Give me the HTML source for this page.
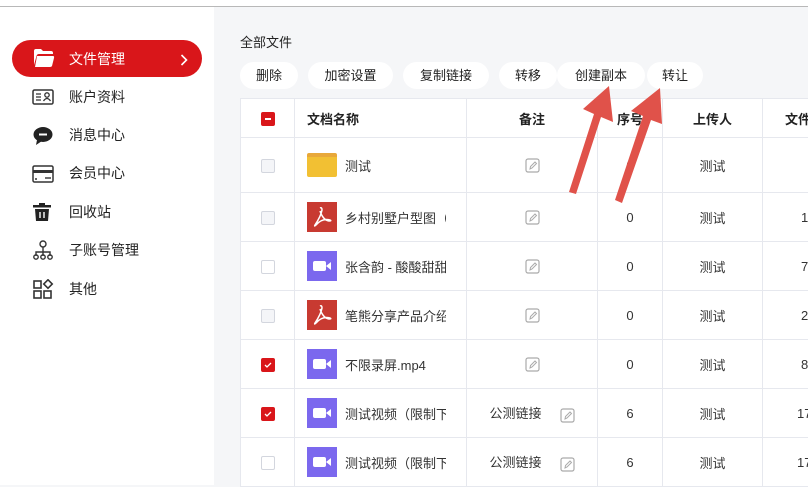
<!DOCTYPE html>
<html><head><meta charset="utf-8"><style>
*{margin:0;padding:0;box-sizing:border-box}
body{width:808px;height:485px;overflow:hidden;background:#f5f6f8;font-family:"Liberation Sans","Noto Sans CJK SC",sans-serif;color:#222;position:relative}
.top{position:absolute;left:0;top:0;width:808px;height:7px;background:#fff;border-bottom:1px solid #b8b8b8}
.side{position:absolute;left:0;top:7px;width:214px;height:478px;background:#fff}
.act{position:absolute;left:12px;top:40px;width:190px;height:37px;border-radius:19px;background:#d9161a}
.mi{position:absolute;left:69px;font-size:14px;line-height:20px;color:#222}
.ic{position:absolute;left:32px}
.crumb{position:absolute;left:240px;top:32px;font-size:13px;color:#222}
.btn{position:absolute;top:62px;height:27px;border-radius:14px;background:#fff;font-size:13px;line-height:27px;text-align:center;color:#222}
table{position:absolute;left:240px;top:98px;border-collapse:collapse;background:#fff;font-size:13px;table-layout:fixed;width:582px}
td{border:1px solid #e6e8ee;height:49px;text-align:center;white-space:nowrap;overflow:hidden;color:#333}
tr.h td{height:39px;font-weight:bold;color:#222}
tr.r1 td{height:55px}
.cb{display:inline-block;width:14px;height:14px;border:1px solid #d3d6de;border-radius:2px;background:#f4f5f8;vertical-align:middle}
.cb.w{background:#fff}
.cb.on{background:#d9161a;border-color:#d9161a;position:relative}
.nm{text-align:left;padding-left:12px}
.nm span{display:inline-block;vertical-align:middle}
.nm .t{max-width:101px;overflow:hidden}
.fi{width:30px;height:30px;margin-right:8px;position:relative}
.vid{background:#7b68ee}
.pdf{background:#c83a31}
.ed{display:inline-block;vertical-align:middle}
</style></head><body>
<div class="top"></div>
<div class="side"></div>
<div class="act"></div>
<svg class="ic" style="top:48px" width="23" height="20" viewBox="0 0 23 20"><path d="M2 3 Q2 1 4 1 H9 L11 3 H19 Q21 3 21 5 V6 H7 Q5 6 4.5 8 L2 17 Z" fill="#fff"/><path d="M5 8 H21 Q22.5 8 22 10 L20 18 Q19.5 19 18 19 H3 Z" fill="#fff"/></svg>
<div class="mi" style="top:49px;color:#fff">文件管理</div>
<svg style="position:absolute;left:180px;top:54px" width="8" height="12"><path d="M1.5 1 L6.5 6 L1.5 11" stroke="#fff" stroke-width="1.6" fill="none"/></svg>
<svg class="ic" style="top:89px" width="22" height="16"><rect x="1" y="1" width="20" height="14" rx="1.5" fill="none" stroke="#333" stroke-width="1.5"/><path d="M4 5h5M4 8h5M4 11h5" stroke="#333" stroke-width="1.3"/><circle cx="15" cy="6" r="2.2" fill="none" stroke="#333" stroke-width="1.3"/><path d="M11.5 12 Q15 7 18.5 12" stroke="#333" stroke-width="1.3" fill="none"/></svg>
<div class="mi" style="top:87px">账户资料</div>
<svg class="ic" style="top:126px" width="22" height="20"><ellipse cx="11" cy="8.5" rx="9.5" ry="7.5" fill="#222"/><path d="M5 14 L4 19 L10 15Z" fill="#222"/><rect x="7" y="7.5" width="8" height="2" fill="#fff"/></svg>
<div class="mi" style="top:125px">消息中心</div>
<svg class="ic" style="top:165px" width="22" height="18"><rect x="1" y="1" width="20" height="16" rx="1.5" fill="none" stroke="#333" stroke-width="1.5"/><rect x="1" y="5" width="20" height="3" fill="#333"/><circle cx="4" cy="14" r="1" fill="#333"/><path d="M13 13h6" stroke="#333" stroke-width="1.4"/></svg>
<div class="mi" style="top:163px">会员中心</div>
<svg class="ic" style="top:203px" width="20" height="18"><rect x="1" y="2" width="18" height="2.5" fill="#222"/><rect x="7" y="0" width="6" height="2" fill="#222"/><path d="M3 6 H17 L16 18 H4Z" fill="#222"/><path d="M8 9v6M12 9v6" stroke="#fff" stroke-width="1.4"/></svg>
<div class="mi" style="top:202px">回收站</div>
<svg class="ic" style="top:240px" width="22" height="20"><circle cx="11" cy="4" r="3" fill="none" stroke="#333" stroke-width="1.4"/><path d="M11 7v4M4 16v-4h14v4M11 11v5" stroke="#333" stroke-width="1.4" fill="none"/><circle cx="4" cy="17" r="2.2" fill="none" stroke="#333" stroke-width="1.4"/><circle cx="11" cy="17" r="2.2" fill="none" stroke="#333" stroke-width="1.4"/><circle cx="18" cy="17" r="2.2" fill="none" stroke="#333" stroke-width="1.4"/></svg>
<div class="mi" style="top:240px">子账号管理</div>
<svg class="ic" style="top:279px" width="22" height="21"><rect x="2" y="2" width="7" height="7" fill="none" stroke="#333" stroke-width="1.6"/><rect x="2" y="12" width="7" height="7" fill="none" stroke="#333" stroke-width="1.6"/><rect x="12" y="12" width="7" height="7" fill="none" stroke="#333" stroke-width="1.6"/><rect x="13" y="2" width="6" height="6" transform="rotate(45 16 5)" fill="none" stroke="#333" stroke-width="1.6"/></svg>
<div class="mi" style="top:279px">其他</div>

<div class="crumb">全部文件</div>
<div class="btn" style="left:240px;width:58px">删除</div>
<div class="btn" style="left:308px;width:85px">加密设置</div>
<div class="btn" style="left:403px;width:86px">复制链接</div>
<div class="btn" style="left:499px;width:58px">转移</div>
<div class="btn" style="left:557px;width:88px">创建副本</div>
<div class="btn" style="left:647px;width:56px">转让</div>

<table>
<colgroup><col style="width:54px"><col style="width:172px"><col style="width:131px"><col style="width:65px"><col style="width:100px"><col style="width:60px"></colgroup>
<tr class="h"><td><span class="cb on"><span style="position:absolute;left:3px;top:5px;width:6px;height:2px;background:#fff"></span></span></td><td class="nm">文档名称</td><td>备注</td><td>序号</td><td>上传人</td><td style="text-align:left;padding-left:22px">文件</td></tr>
<tr class="r1"><td><span class="cb"></span></td><td class="nm"><span class="fi" style="background:#f2c033;height:24px;border-radius:2px;border-top:4px solid #e8a83a"></span><span class="t">测试</span></td><td><svg class="ed" width="15" height="15"><rect x="1" y="1" width="13" height="13" rx="2" fill="none" stroke="#aaa" stroke-width="1.2"/><path d="M5 11 L5.5 8.5 L10 4 L11.5 5.5 L7 10 Z" fill="none" stroke="#aaa" stroke-width="1"/></svg></td><td>0</td><td>测试</td><td></td></tr>
<tr><td><span class="cb"></span></td><td class="nm"><span class="fi pdf"><svg width="30" height="30"><path d="M13 6 Q15 5 15 8 Q14 14 8 23 Q7 25 9 23 Q15 16 23 18 Q25 19 22 19 Q16 18 13 9" stroke="#fff" stroke-width="1.5" fill="none"/></svg></span><span class="t">乡村别墅户型图（1</span></td><td><svg class="ed" width="15" height="15"><rect x="1" y="1" width="13" height="13" rx="2" fill="none" stroke="#aaa" stroke-width="1.2"/><path d="M5 11 L5.5 8.5 L10 4 L11.5 5.5 L7 10 Z" fill="none" stroke="#aaa" stroke-width="1"/></svg></td><td>0</td><td>测试</td><td style="text-align:left;padding-left:38px">1</td></tr>
<tr><td><span class="cb w"></span></td><td class="nm"><span class="fi vid"><svg width="30" height="30"><rect x="6" y="10" width="13" height="10" rx="2" fill="#fff"/><path d="M19 15 L24 11 V19Z" fill="#fff"/></svg></span><span class="t">张含韵 - 酸酸甜甜的</span></td><td><svg class="ed" width="15" height="15"><rect x="1" y="1" width="13" height="13" rx="2" fill="none" stroke="#aaa" stroke-width="1.2"/><path d="M5 11 L5.5 8.5 L10 4 L11.5 5.5 L7 10 Z" fill="none" stroke="#aaa" stroke-width="1"/></svg></td><td>0</td><td>测试</td><td style="text-align:left;padding-left:38px">7</td></tr>
<tr><td><span class="cb"></span></td><td class="nm"><span class="fi pdf"><svg width="30" height="30"><path d="M13 6 Q15 5 15 8 Q14 14 8 23 Q7 25 9 23 Q15 16 23 18 Q25 19 22 19 Q16 18 13 9" stroke="#fff" stroke-width="1.5" fill="none"/></svg></span><span class="t">笔熊分享产品介绍</span></td><td><svg class="ed" width="15" height="15"><rect x="1" y="1" width="13" height="13" rx="2" fill="none" stroke="#aaa" stroke-width="1.2"/><path d="M5 11 L5.5 8.5 L10 4 L11.5 5.5 L7 10 Z" fill="none" stroke="#aaa" stroke-width="1"/></svg></td><td>0</td><td>测试</td><td style="text-align:left;padding-left:38px">2</td></tr>
<tr><td><span class="cb on"><svg width="12" height="12" style="position:absolute;left:0;top:0"><path d="M3 6 L5 8 L9 4" stroke="#fff" stroke-width="1.3" fill="none"/></svg></span></td><td class="nm"><span class="fi vid"><svg width="30" height="30"><rect x="6" y="10" width="13" height="10" rx="2" fill="#fff"/><path d="M19 15 L24 11 V19Z" fill="#fff"/></svg></span><span class="t">不限录屏.mp4</span></td><td><svg class="ed" width="15" height="15"><rect x="1" y="1" width="13" height="13" rx="2" fill="none" stroke="#aaa" stroke-width="1.2"/><path d="M5 11 L5.5 8.5 L10 4 L11.5 5.5 L7 10 Z" fill="none" stroke="#aaa" stroke-width="1"/></svg></td><td>0</td><td>测试</td><td style="text-align:left;padding-left:38px">8</td></tr>
<tr><td><span class="cb on"><svg width="12" height="12" style="position:absolute;left:0;top:0"><path d="M3 6 L5 8 L9 4" stroke="#fff" stroke-width="1.3" fill="none"/></svg></span></td><td class="nm"><span class="fi vid"><svg width="30" height="30"><rect x="6" y="10" width="13" height="10" rx="2" fill="#fff"/><path d="M19 15 L24 11 V19Z" fill="#fff"/></svg></span><span class="t">测试视频（限制下载</span></td><td>公测链接&nbsp;&nbsp;&nbsp;&nbsp;&nbsp;<svg class="ed" width="15" height="15"><rect x="1" y="1" width="13" height="13" rx="2" fill="none" stroke="#aaa" stroke-width="1.2"/><path d="M5 11 L5.5 8.5 L10 4 L11.5 5.5 L7 10 Z" fill="none" stroke="#aaa" stroke-width="1"/></svg></td><td>6</td><td>测试</td><td style="text-align:left;padding-left:34px">17</td></tr>
<tr><td><span class="cb w"></span></td><td class="nm"><span class="fi vid"><svg width="30" height="30"><rect x="6" y="10" width="13" height="10" rx="2" fill="#fff"/><path d="M19 15 L24 11 V19Z" fill="#fff"/></svg></span><span class="t">测试视频（限制下载</span></td><td>公测链接&nbsp;&nbsp;&nbsp;&nbsp;&nbsp;<svg class="ed" width="15" height="15"><rect x="1" y="1" width="13" height="13" rx="2" fill="none" stroke="#aaa" stroke-width="1.2"/><path d="M5 11 L5.5 8.5 L10 4 L11.5 5.5 L7 10 Z" fill="none" stroke="#aaa" stroke-width="1"/></svg></td><td>6</td><td>测试</td><td style="text-align:left;padding-left:34px">17</td></tr>
</table>
<svg style="position:absolute;left:0;top:0" width="808" height="485"><g fill="#e0524a"><path d="M569 192 L576 194 L601 117 L613 122 L609 86 L583 109 L594 114 Z"/><path d="M615 200 L622 203 L651 120 L662 124 L660 88 L631 111 L643 116 Z"/></g></svg>
</body></html>
